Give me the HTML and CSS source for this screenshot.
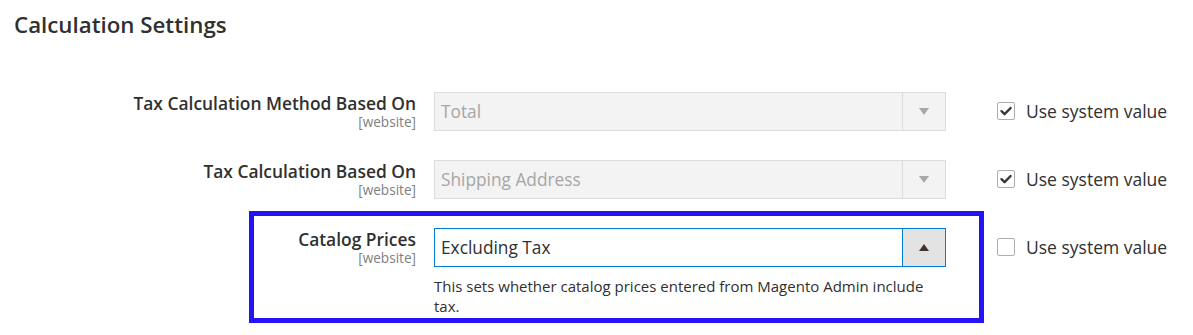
FILE: index.html
```html
<!DOCTYPE html>
<html>
<head>
<meta charset="utf-8">
<link rel="stylesheet" href="styles.css">
</head>
<body>
<h2 class="title">Calculation Settings</h2>
<div class="form">
  <div class="row">
    <div class="label"><span class="name">Tax Calculation Method Based On</span><span class="scope">[website]</span></div>
    <div class="control">
      <div class="select disabled"><span class="value">Total</span><span class="arrow"><span class="tri down"></span></span></div>
    </div>
    <label class="use"><span class="box checked"><svg viewBox="0 0 18 18" width="18" height="18"><path d="M4.5 9.2 L7.6 12.2 L13.6 6" fill="none" stroke="#41362f" stroke-width="2.4" stroke-linecap="round" stroke-linejoin="round"/></svg></span><span class="use-text">Use system value</span></label>
  </div>
  <div class="row">
    <div class="label"><span class="name">Tax Calculation Based On</span><span class="scope">[website]</span></div>
    <div class="control">
      <div class="select disabled"><span class="value">Shipping Address</span><span class="arrow"><span class="tri down"></span></span></div>
    </div>
    <label class="use"><span class="box checked"><svg viewBox="0 0 18 18" width="18" height="18"><path d="M4.5 9.2 L7.6 12.2 L13.6 6" fill="none" stroke="#41362f" stroke-width="2.4" stroke-linecap="round" stroke-linejoin="round"/></svg></span><span class="use-text">Use system value</span></label>
  </div>
  <div class="row highlight">
    <div class="label"><span class="name">Catalog Prices</span><span class="scope">[website]</span></div>
    <div class="control">
      <div class="select active"><span class="value">Excluding Tax</span><span class="arrow"><span class="tri up"></span></span></div>
      <p class="note">This sets whether catalog prices entered from Magento Admin include tax.</p>
    </div>
    <label class="use"><span class="box"></span><span class="use-text">Use system value</span></label>
  </div>
</div>
</body>
</html>
```

FILE: styles.css
```css
html, body {
  margin: 0;
  padding: 0;
  background: #ffffff;
}
body {
  font-family: "Open Sans", "DejaVu Sans", sans-serif;
  color: #303030;
  width: 1193px;
  height: 335px;
  overflow: hidden;
}
.title {
  margin: 0;
  padding: 10px 0 0 14px;
  font-size: 22.3px;
  line-height: 30px;
  font-weight: 600;
  color: #303030;
}
.form {
  display: flex;
  flex-direction: column;
  gap: 29px;
  padding-top: 52px;
}
.row {
  display: grid;
  grid-template-columns: 434px 512px auto;
  align-items: start;
  position: relative;
}
.label {
  display: flex;
  flex-direction: column;
  align-items: flex-end;
  padding-right: 18px;
  padding-top: 1px;
}
.name {
  font-size: 17.4px;
  line-height: 21px;
  font-weight: 600;
  color: #303030;
}
.scope {
  font-size: 13.6px;
  line-height: 15px;
  color: #808080;
}
.control {
  display: flex;
  flex-direction: column;
}
.select {
  height: 39px;
  box-sizing: border-box;
  display: flex;
  align-items: stretch;
  border: 1px solid #adadad;
}
.select .value {
  flex: 1;
  display: flex;
  align-items: center;
  padding-left: 6px;
  font-size: 17.3px;
}
.select .arrow {
  width: 42px;
  display: flex;
  align-items: center;
  justify-content: center;
  border-left: 1px solid #adadad;
}
.select.disabled {
  background: #f3f3f3;
  border-color: #dcdcdc;
}
.select.disabled .value { color: #a6a6a6; }
.select.disabled .arrow { border-left-color: #dcdcdc; }
.select.active {
  border-color: #007bdb;
  background: #ffffff;
}
.select.active .value { color: #303030; }
.select.active .arrow {
  border-left-color: #007bdb;
  background: #e3e3e3;
}
.tri {
  width: 0;
  height: 0;
  border-left: 5.5px solid transparent;
  border-right: 5.5px solid transparent;
}
.tri.down { border-top: 7px solid #a8a8a8; }
.tri.up { border-bottom: 7px solid #41362f; }
.note {
  margin: 9px 0 0;
  padding: 0 10px 0 0;
  font-size: 15px;
  line-height: 20px;
  color: #303030;
}
.use {
  display: flex;
  align-items: center;
  gap: 11px;
  margin-left: 51px;
  height: 38px;
}
.box {
  width: 18px;
  height: 18px;
  box-sizing: border-box;
  border: 1px solid #adadad;
  border-radius: 2px;
  background: #fff;
  display: flex;
  align-items: center;
  justify-content: center;
  position: relative;
}
.box svg {
  position: absolute;
  left: -1px;
  top: -1px;
}
.use-text {
  font-size: 17.5px;
  color: #303030;
}
.highlight::before {
  content: "";
  position: absolute;
  left: 249px;
  top: -17px;
  width: 735px;
  height: 112px;
  box-sizing: border-box;
  border: 5px solid #2313f5;
  pointer-events: none;
}
```
